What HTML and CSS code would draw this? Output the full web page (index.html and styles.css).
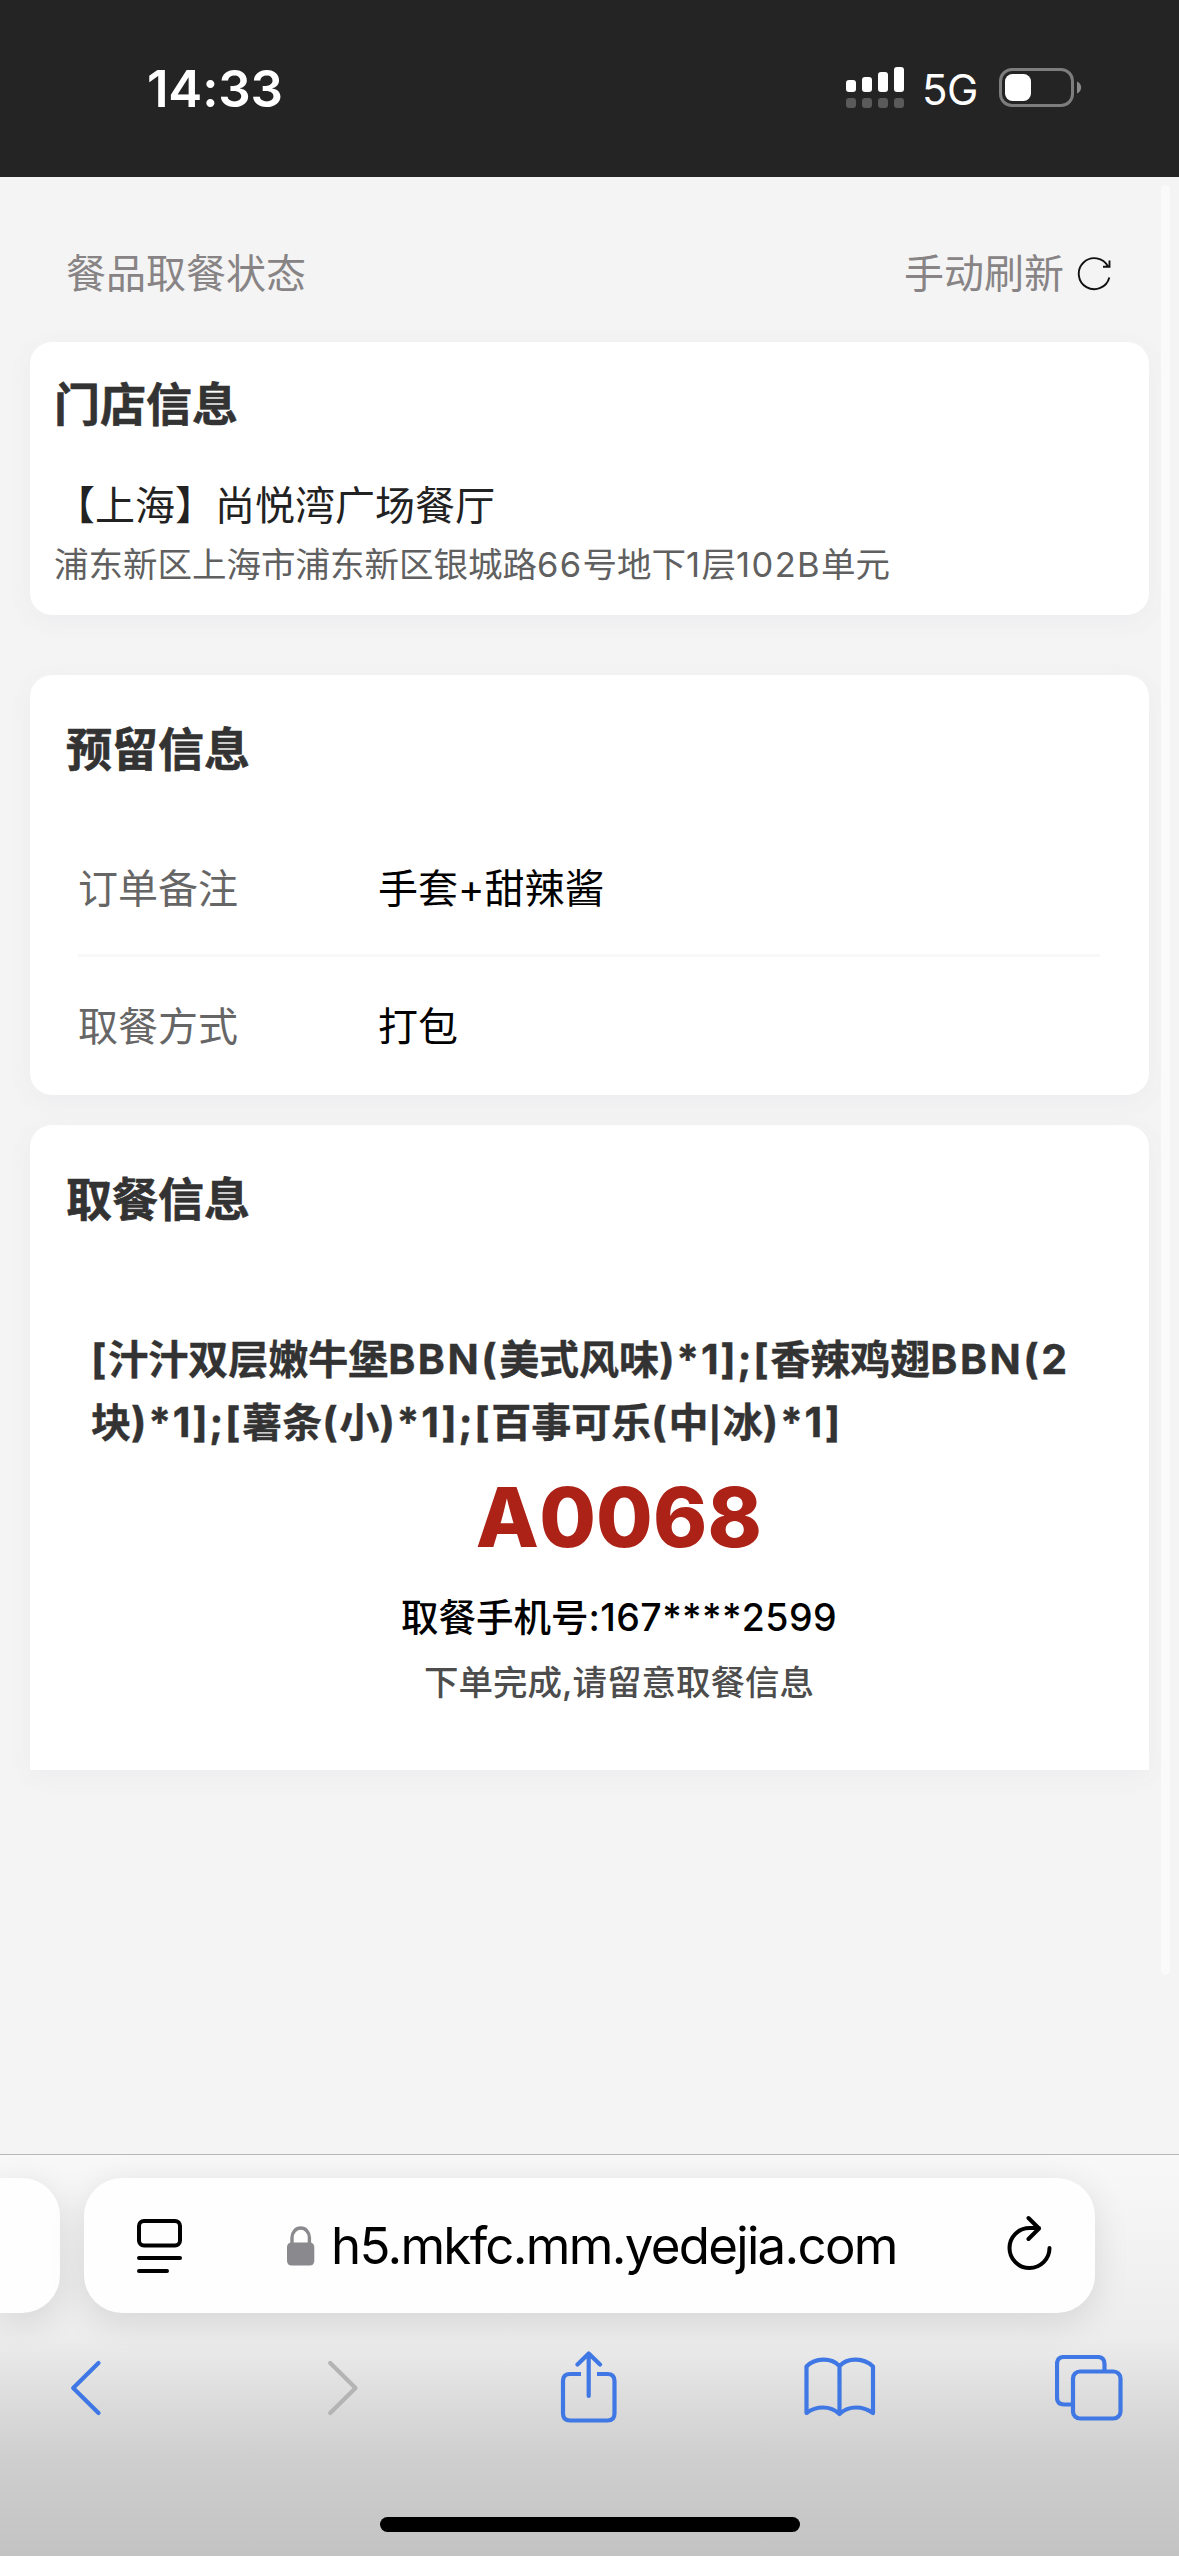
FILE: index.html
```html
<!DOCTYPE html>
<html lang="zh-CN">
<head>
<meta charset="utf-8">
<title>餐品取餐状态</title>
<link rel="stylesheet" href="styles.css">
</head>
<body>
<div class="screen">
  <header class="status-bar">
    <span class="clock">14:33</span>
    <div class="status-icons">
      <svg class="signal" width="58" height="42" viewBox="0 0 58 42">
        <g fill="#fff"><rect x="0" y="13" width="10" height="12" rx="3"/><rect x="16" y="10" width="10" height="15" rx="3"/><rect x="32" y="5" width="10" height="20" rx="3"/><rect x="48" y="0" width="10" height="25" rx="3"/></g>
        <g fill="#5a5a5a"><rect x="0" y="31" width="10" height="10" rx="3"/><rect x="16" y="31" width="10" height="10" rx="3"/><rect x="32" y="31" width="10" height="10" rx="3"/><rect x="48" y="31" width="10" height="10" rx="3"/></g>
      </svg>
      <span class="network">5G</span>
      <svg class="battery" width="84" height="40" viewBox="0 0 84 40">
        <rect x="1.5" y="1.5" width="72" height="36" rx="11.5" fill="none" stroke="#7d7d7d" stroke-width="3"/>
        <rect x="6" y="6" width="26" height="27" rx="7.5" fill="#fff"/>
        <path d="M78 13.500c5.500 2 5.500 10 0 12z" fill="#8a8a8a"/>
      </svg>
    </div>
  </header>

  <main class="page">
    <div class="page-head">
      <span>餐品取餐状态</span>
      <button class="refresh">手动刷新
        <svg width="36" height="36" viewBox="0 0 36 36" fill="none" stroke="#111" stroke-width="1.900">
          <path d="M33.300 21.500A15.500 15.500 0 1 1 32 10.500M33.500 4.500V10.800H27"/>
        </svg>
      </button>
    </div>

    <section class="card store">
      <h2>门店信息</h2>
      <p class="store-name">【上海】尚悦湾广场餐厅</p>
      <p class="store-address">浦东新区上海市浦东新区银城路<span class="latin">66</span>号地下<span class="latin">1</span>层<span class="latin">102B</span>单元</p>
    </section>

    <section class="card reserve">
      <h2>预留信息</h2>
      <dl class="fields">
        <div class="field"><dt>订单备注</dt><dd>手套+甜辣酱</dd></div>
        <div class="field"><dt>取餐方式</dt><dd>打包</dd></div>
      </dl>
    </section>

    <section class="card pickup">
      <h2>取餐信息</h2>
      <p class="items"><span class="latin">[</span>汁汁双层嫩牛堡<span class="latin name">BBN(</span>美式风味<span class="latin">)*1];[</span>香辣鸡翅<span class="latin name">BBN(2</span><br>块<span class="latin">)*1];[</span>薯条<span class="latin">(</span>小<span class="latin">)*1];[</span>百事可乐<span class="latin">(</span>中<span class="latin bar">|</span>冰<span class="latin">)*1]</span></p>
      <p class="code">A0068</p>
      <p class="phone">取餐手机号<span class="latin">:167****2599</span></p>
      <p class="note">下单完成,请留意取餐信息</p>
    </section>
    <i class="scrollbar"></i>
  </main>

  <footer class="browser">
    <div class="tabs">
      <div class="tab previous"></div>
      <div class="tab current">
        <svg class="reader" width="46" height="56" viewBox="0 0 46 56">
          <rect x="2" y="2" width="41" height="24.500" rx="5"/><path d="M2 39H43M2 52H30"/>
        </svg>
        <div class="address">
          <svg width="28" height="40" viewBox="0 0 28 40">
            <path d="M5 19V11.500a8.700 9.500 0 0 1 17.400 0V19" fill="none" stroke="#8a8a8e" stroke-width="3.400"/>
            <rect x="0" y="16.500" width="27.300" height="23" rx="4.500" fill="#8a8a8e"/>
          </svg>
          <span class="url">h5.mkfc.mm.yedejia.com</span>
        </div>
        <svg class="reload" width="46" height="56" viewBox="0 0 46 56">
          <path d="M42.500 33A20 20 0 1 1 22.500 13H32M21.500 3L32 13.500L21.500 24"/>
        </svg>
      </div>
    </div>
    <nav class="toolbar">
      <svg width="32" height="56" viewBox="0 0 32 56" class="tool"><path d="M28.500 3L3.200 28L28.500 53"/></svg>
      <svg width="32" height="56" viewBox="0 0 32 56" class="tool forward"><path d="M3.200 3L28.500 28L3.200 53"/></svg>
      <svg width="58" height="75" viewBox="0 0 58 75" class="tool share"><path stroke-linecap="butt" d="M21 23H10Q3 23 3 30V62.500Q3 69.500 10 69.500H47.500Q54.500 69.500 54.500 62.500V30Q54.500 23 47.500 23H37"/><path d="M28.700 45V3M17.500 13.500L28.700 2.500L40 13.500"/></svg>
      <svg width="72" height="62" viewBox="0 0 72 62" class="tool book"><path d="M35.500 9C27 0 11 1 2.500 9.500V56C12 49 26 48 35.500 57C45 48 59 49 69 56V9.500C60 1 44 0 35.500 9V56"/></svg>
      <svg width="68" height="66" viewBox="0 0 68 66" class="tool windows"><rect x="18" y="16.500" width="47.500" height="47" rx="7"/><path stroke-linecap="butt" d="M49.500 16V9Q49.500 2 42.500 2H9Q2 2 2 9V42.500Q2 49.500 9 49.500H17"/></svg>
    </nav>
    <div class="home-indicator"></div>
  </footer>
</div>
</body>
</html>
```
FILE: styles.css
```css
* { box-sizing: border-box; }
body { margin: 0; font-family: Inter, "Noto Sans CJK SC", sans-serif; }
h2, p, dl, dd { margin: 0; }

.screen { width: 1179px; height: 2556px; display: flex; flex-direction: column; overflow: hidden; background: #f4f4f4; }

.status-bar { height: 177px; flex: none; padding: 58px 96px 0 147px; display: flex; justify-content: space-between; align-items: flex-start; background: #242424; color: #fff; }
.clock { font-size: 51px; line-height: 61px; font-weight: 600; letter-spacing: -.2px; }
.status-icons { display: flex; align-items: flex-start; }
.signal { margin-top: 9px; }
.network { margin: 7px 23px 0 18px; width: 54px; font-size: 42px; line-height: 50px; letter-spacing: -.5px; }
.battery { margin-top: 10px; }

.page { position: relative; flex: 1; padding: 0 30px; }
.page-head { height: 165px; padding: 72px 37px 0 36px; display: flex; justify-content: space-between; color: #888485; font-size: 40px; line-height: 50px; }
.refresh { display: flex; align-items: center; gap: 12px; height: 50px; border: 0; padding: 0; background: none; color: inherit; font: inherit; }

.card { border-radius: 22px; background: #fff; box-shadow: 0 6px 26px rgba(100, 100, 150, .05); }
.card h2 { font-size: 46px; line-height: 60px; font-weight: 700; color: #333; -webkit-text-stroke: .6px #333; }

.store { height: 273px; padding: 32px 24px 0; }
.store-name { margin: 47px 0 0 1px; font-size: 40px; line-height: 50px; color: #222; }
.store-address { margin-top: 11px; font-size: 34.500px; line-height: 46px; color: #606060; }
.store-address .latin { letter-spacing: 1.400px; }

.reserve { height: 420px; margin-top: 60px; padding: 44px 36px 0; }
.fields { margin: 41px 13px 0 12px; }
.field { display: flex; padding: 44px 0 40px; font-size: 40px; line-height: 50px; }
.field + .field { border-top: 3px solid #f8f8f8; padding-top: 45px; }
.field dt { width: 300px; color: #666; }
.field dd { color: #000; }

.pickup { height: 645px; margin-top: 30px; padding: 44px 0 0 36px; border-radius: 22px 22px 0 0; }
.items { height: 126px; margin: 99px 0 0 25px; font-size: 40px; line-height: 63px; font-weight: 700; color: #333; -webkit-text-stroke: .4px #333; white-space: nowrap; }
.items .latin { font-size: 41px; line-height: 1; letter-spacing: 1.700px; }
.items .name { letter-spacing: 2.500px; }
.items .bar { font-size: 34px; }
.code, .phone, .note { padding-left: 23px; text-align: center; }
.code { margin-top: 19px; font-size: 82px; line-height: 90px; font-weight: 800; letter-spacing: .2px; color: #ad2217; }
.phone { margin-top: 30px; font-size: 37.500px; line-height: 50px; font-weight: 500; color: #000; }
.phone .latin { letter-spacing: .4px; }
.note { margin-top: 17px; font-size: 34.500px; line-height: 46px; font-weight: 500; color: #4d4d4d; }

.scrollbar { position: absolute; top: 8px; right: 9px; width: 9px; height: 1790px; border-radius: 5px; background: #fafafa; }

.browser { height: 402px; flex: none; border-top: 1px solid #b8b8b8; background: linear-gradient(#f8f8f8 0, #f2f2f2 100px, #ececec 185px, #dcdcdc 245px, #cfcfcf 300px, #c3c3c3 402px); }
.tabs { display: flex; gap: 24px; padding-top: 23px; }
.tab { height: 135px; border-radius: 38px; background: #fefefe; box-shadow: 0 8px 36px rgba(0, 0, 0, .11); }
.previous { width: 60px; border-radius: 0 38px 38px 0; }
.current { width: 1011px; padding: 0 42px 0 53px; display: flex; align-items: center; }
.reader, .reload { fill: none; stroke: #000; stroke-width: 4; stroke-linecap: round; stroke-linejoin: round; }
.reader { margin-top: 3px; }
.reload { margin: 0 0 5px auto; }
.address { display: flex; align-items: center; gap: 16px; margin-left: 104px; }
.url { font-size: 51px; line-height: 64px; letter-spacing: -1.700px; color: #000; white-space: nowrap; }

.toolbar { height: 150px; padding-left: 70px; display: flex; align-items: center; }
.tool { fill: none; stroke: #3f78e4; stroke-width: 4.200; stroke-linecap: round; stroke-linejoin: round; }
.forward { margin-left: 225px; stroke: #b4b4b4; }
.share { margin-left: 201px; }
.book { margin-left: 186px; }
.windows { margin-left: 179px; }
.home-indicator { width: 420px; height: 15px; margin: 54px auto 0; border-radius: 8px; background: #000; }
```
